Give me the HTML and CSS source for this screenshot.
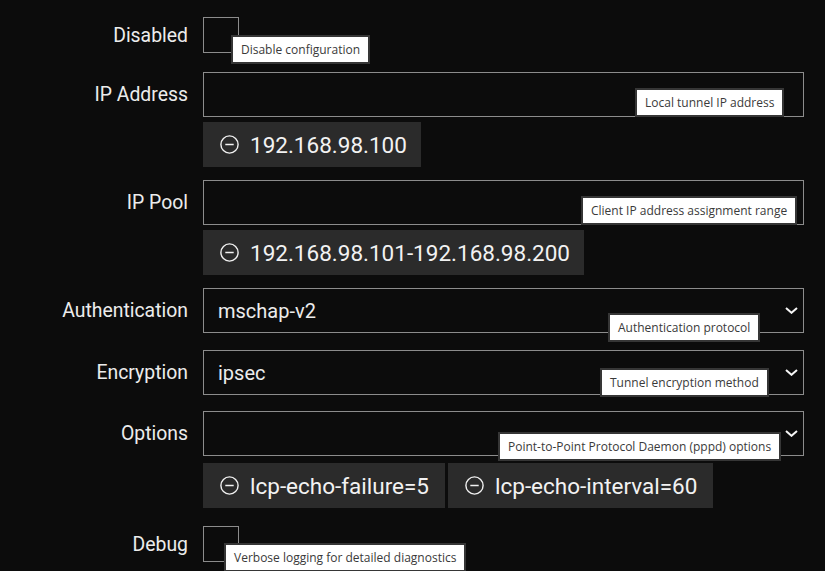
FILE: index.html
```html
<!DOCTYPE html>
<html>
<head>
<meta charset="utf-8">
<link rel="stylesheet" href="styles.css">
</head>
<body>
<div class="form">
  <div class="row row-disabled">
    <div class="label label-box">Disabled</div>
    <div class="field">
      <div class="checkbox"></div>
      <div class="tip tip-disabled">Disable configuration</div>
    </div>
  </div>

  <div class="row row-ip">
    <div class="label">IP Address</div>
    <div class="field">
      <div class="input"></div>
      <div class="tip tip-ip">Local tunnel IP address</div>
      <div class="chips">
        <div class="chip"><svg class="minus" viewBox="0 0 19 19" width="19" height="19"><circle cx="9.5" cy="9.5" r="8.6" fill="none" stroke="#f2f2f2" stroke-width="1.4"/><line x1="5.3" y1="9.5" x2="13.7" y2="9.5" stroke="#f2f2f2" stroke-width="1.5"/></svg><span>192.168.98.100</span></div>
      </div>
    </div>
  </div>

  <div class="row row-pool">
    <div class="label">IP Pool</div>
    <div class="field">
      <div class="input"></div>
      <div class="tip tip-pool">Client IP address assignment range</div>
      <div class="chips">
        <div class="chip"><svg class="minus" viewBox="0 0 19 19" width="19" height="19"><circle cx="9.5" cy="9.5" r="8.6" fill="none" stroke="#f2f2f2" stroke-width="1.4"/><line x1="5.3" y1="9.5" x2="13.7" y2="9.5" stroke="#f2f2f2" stroke-width="1.5"/></svg><span>192.168.98.101-192.168.98.200</span></div>
      </div>
    </div>
  </div>

  <div class="row row-auth">
    <div class="label">Authentication</div>
    <div class="field">
      <div class="select"><span>mschap-v2</span><svg class="chev" viewBox="0 0 13 7" width="13" height="7"><polyline points="1,1 6.5,5.8 12,1" fill="none" stroke="#f5f5f5" stroke-width="2"/></svg></div>
      <div class="tip tip-auth">Authentication protocol</div>
    </div>
  </div>

  <div class="row row-enc">
    <div class="label">Encryption</div>
    <div class="field">
      <div class="select"><span>ipsec</span><svg class="chev" viewBox="0 0 13 7" width="13" height="7"><polyline points="1,1 6.5,5.8 12,1" fill="none" stroke="#f5f5f5" stroke-width="2"/></svg></div>
      <div class="tip tip-enc">Tunnel encryption method</div>
    </div>
  </div>

  <div class="row row-opt">
    <div class="label">Options</div>
    <div class="field">
      <div class="select"><span></span><svg class="chev" viewBox="0 0 13 7" width="13" height="7"><polyline points="1,1 6.5,5.8 12,1" fill="none" stroke="#f5f5f5" stroke-width="2"/></svg></div>
      <div class="tip tip-opt">Point-to-Point Protocol Daemon (pppd) options</div>
      <div class="chips chips-opt">
        <div class="chip chip-wide"><svg class="minus" viewBox="0 0 19 19" width="19" height="19"><circle cx="9.5" cy="9.5" r="8.6" fill="none" stroke="#f2f2f2" stroke-width="1.4"/><line x1="5.3" y1="9.5" x2="13.7" y2="9.5" stroke="#f2f2f2" stroke-width="1.5"/></svg><span>lcp-echo-failure=5</span></div>
        <div class="chip chip-wide"><svg class="minus" viewBox="0 0 19 19" width="19" height="19"><circle cx="9.5" cy="9.5" r="8.6" fill="none" stroke="#f2f2f2" stroke-width="1.4"/><line x1="5.3" y1="9.5" x2="13.7" y2="9.5" stroke="#f2f2f2" stroke-width="1.5"/></svg><span>lcp-echo-interval=60</span></div>
      </div>
    </div>
  </div>

  <div class="row row-debug">
    <div class="label label-box">Debug</div>
    <div class="field">
      <div class="checkbox"></div>
      <div class="tip tip-debug">Verbose logging for detailed diagnostics</div>
    </div>
  </div>
</div>
</body>
</html>
```

FILE: styles.css
```css
html, body {
  margin: 0;
  padding: 0;
  background: #0c0c0c;
  height: 100%;
  overflow: hidden;
}
body {
  font-family: Roboto, "Liberation Sans", sans-serif;
  color: #ececec;
}
.form {
  padding-top: 17px;
  width: 804px;
}
.row {
  display: flex;
  align-items: flex-start;
  gap: 15px;
}
.row-disabled { margin-bottom: 19px; }
.row-ip { margin-bottom: 13px; }
.row-pool { margin-bottom: 13px; }
.row-auth { margin-bottom: 17px; }
.row-enc { margin-bottom: 16px; }
.row-opt { margin-bottom: 18px; }

.label {
  width: 188px;
  flex: none;
  height: 45px;
  display: flex;
  align-items: center;
  justify-content: flex-end;
  font-size: 19.4px;
  color: #ececec;
}
.label-box { height: 36px; }

.field {
  position: relative;
  flex: 1;
  min-width: 0;
}
.checkbox {
  width: 34px;
  height: 34px;
  border: 1px solid #8c8c8c;
}
.input, .select {
  height: 43px;
  border: 1px solid #8c8c8c;
}
.select {
  display: flex;
  align-items: center;
  justify-content: space-between;
  padding: 0 5px 0 14px;
  font-size: 20px;
  color: #ececec;
}
.chev { display: block; }

.chips {
  display: flex;
  gap: 3px;
  margin-top: 5px;
}
.chips-opt { margin-top: 7px; }
.chip {
  height: 45px;
  background: #2b2b2b;
  display: flex;
  align-items: center;
  gap: 11px;
  padding: 0 14px 0 17px;
  font-size: 22.5px;
  color: #f2f2f2;
}
.chip-wide { padding-right: 16px; }
.minus { display: block; flex: none; }

.tip {
  position: absolute;
  background: #ffffff;
  border: 2px solid #363636;
  padding: 4px 8px;
  line-height: 17px;
  font-family: "Open Sans", "Noto Sans", sans-serif;
  font-size: 12px;
  color: #3a3a3a;
  white-space: nowrap;
}
.tip-disabled { left: 28px; top: 18px; }
.tip-ip { left: 432px; top: 16px; }
.tip-pool { left: 378px; top: 16px; }
.tip-auth { left: 405px; top: 25px; }
.tip-enc { left: 397px; top: 18px; }
.tip-opt { left: 295px; top: 21px; }
.tip-debug { left: 21px; top: 17px; }
```
